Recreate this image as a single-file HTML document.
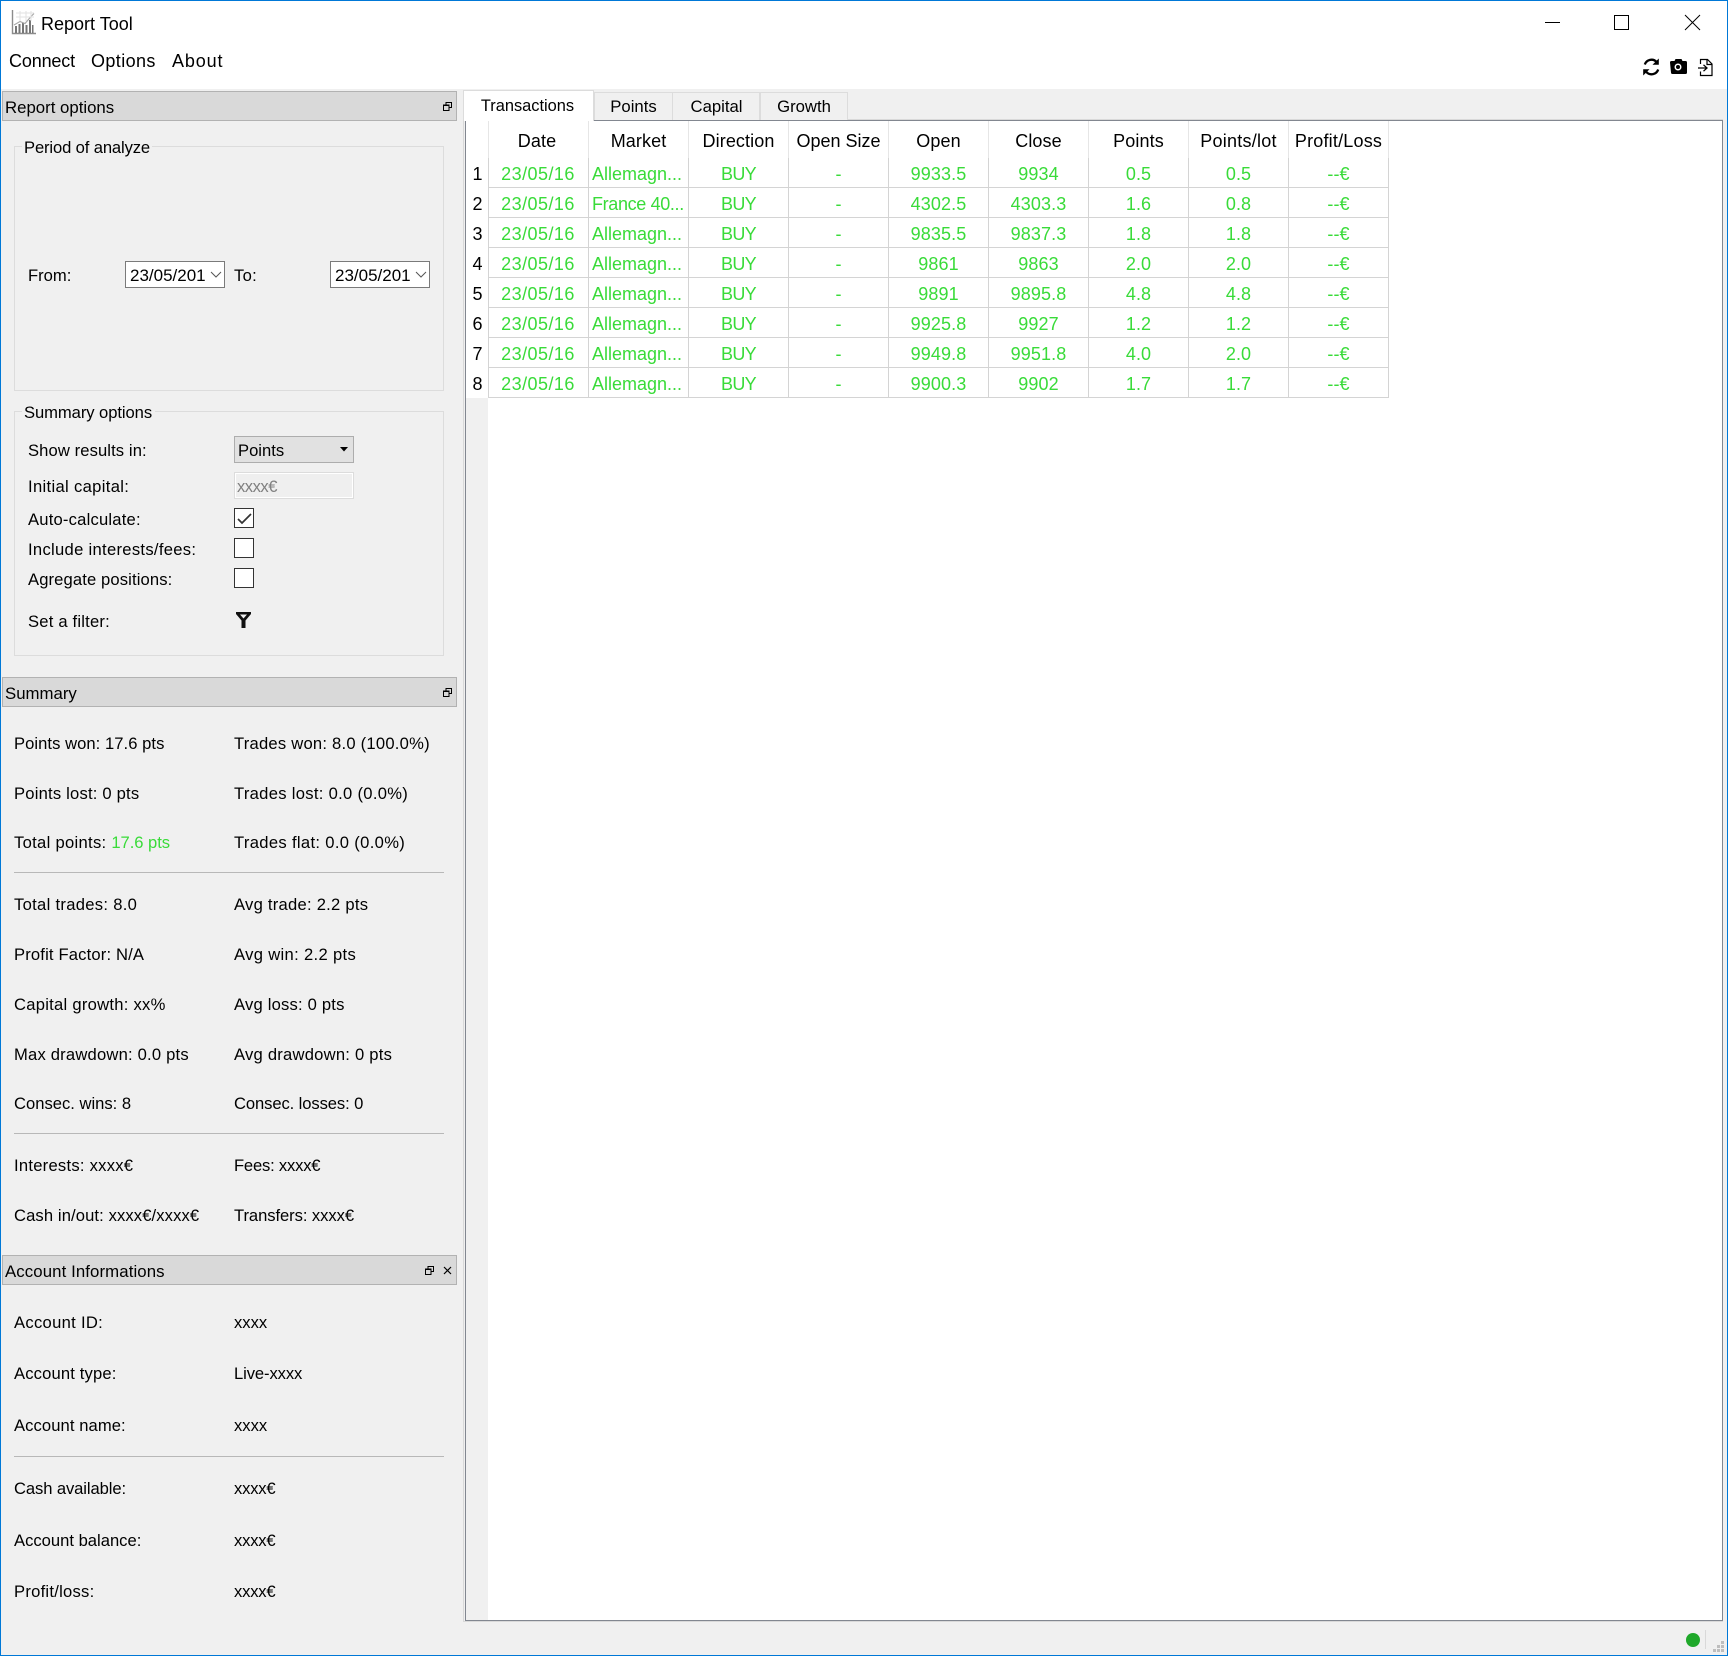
<!DOCTYPE html>
<html lang="en"><head><meta charset="utf-8"><title>Report Tool</title>
<style>
html,body{margin:0;padding:0;background:#f0f0f0}
body{width:1728px;height:1656px;position:relative;overflow:hidden;font-family:"Liberation Sans",sans-serif;color:#000}
.a,.t{position:absolute}
.t{white-space:nowrap;font-size:16.6px;line-height:20px}
.dock{position:absolute;left:2px;width:453px;height:28px;background:#d9d9d9;border:1px solid #b2b2b2}
.dock span{position:absolute;left:2px;top:6px;font-size:16.8px;line-height:20px}
.group{position:absolute;left:14px;width:428px;border:1px solid #dcdcdc}
.hr{position:absolute;left:14px;width:430px;height:1px;background:#b8b8b8}
.tab{position:absolute;box-sizing:border-box;height:28px;top:92px;background:#f0f0f0;border:1px solid #dcdcdc;border-bottom:0;font-size:16.7px;line-height:27px;text-align:center}
.date{position:absolute;box-sizing:border-box;top:261px;width:100px;height:27px;background:#fff;border:1px solid #7a7a7a;overflow:hidden}
.date span{position:absolute;left:4px;top:4px;font-size:17px;line-height:20px;width:76px;overflow:hidden;white-space:nowrap}
.date svg{position:absolute;left:84px;top:9px}
.cb{position:absolute;box-sizing:border-box;left:234px;width:20px;height:20px;background:#fff;border:1px solid #333}
table{position:absolute;left:466px;top:121px;border-collapse:separate;border-spacing:0;table-layout:fixed;width:923px;background:#fff;font-size:18px}
col.g{width:23px}col.c{width:100px}
th,td{box-sizing:border-box;padding:3px 0 0;text-align:center;white-space:nowrap;overflow:hidden}
th{height:37px;font-weight:400;border-right:1px solid #e6e6e6;letter-spacing:.1px}
td{height:30px;color:#39db39;border-right:1px solid #d4d4d4;border-bottom:1px solid #d4d4d4;letter-spacing:.1px}
td:nth-child(2){letter-spacing:.45px;padding-right:1px}
th:nth-child(2){padding-right:3px}
td.n{color:#000;border-bottom:0;background:#fff;text-align:center;padding-left:1px}
td.l{text-align:left;padding-left:3px;letter-spacing:0}
td.b{letter-spacing:-.7px}
th.n{border-right:1px solid #e6e6e6}
.g{color:#39db39}
</style></head><body>

<!-- window background / header -->
<div class="a" style="left:0;top:0;width:1728px;height:89px;background:#fff"></div>

<!-- logo -->
<svg class="a" style="left:11px;top:9px" width="26" height="26" viewBox="0 0 26 26">
<path d="M1.500 1v23.500H25" fill="none" stroke="#8c8c8c" stroke-width="1.400"/>
<path d="M4 24V17h2v7zM7.500 24V15h2v9zM11 24V14h2v10zM14.500 24V16h2v8zM18 24V11h2v13zM21 24V16h1.500v8z" fill="#777"/>
<path d="M3 16l6-3.500 5 2 6-7 3-3" fill="none" stroke="#a8a8a8" stroke-width="1.200"/>
<path d="M5 4h18M5 8h18M9 2v10M15 2v10M20 2v10" stroke="#e2e2e2" stroke-width="1"/>
</svg>
<div class="t" style="left:41px;top:14px;font-size:18px">Report Tool</div>
<div class="t" style="left:9px;top:51px;font-size:18px;letter-spacing:-.15px">Connect</div>
<div class="t" style="left:91px;top:51px;font-size:18px;letter-spacing:.4px">Options</div>
<div class="t" style="left:172px;top:51px;font-size:18px;letter-spacing:.85px">About</div>

<!-- window controls -->
<svg class="a" style="left:1530px;top:0" width="190" height="40" viewBox="0 0 190 40">
<path d="M15 22.500h15" stroke="#000" stroke-width="1"/>
<rect x="84.500" y="15.500" width="14" height="14" fill="none" stroke="#000" stroke-width="1"/>
<path d="M155 15l15 15M170 15l-15 15" stroke="#000" stroke-width="1"/>
</svg>

<!-- toolbar -->
<svg class="a" style="left:1640px;top:56px" width="78" height="22" viewBox="0 0 78 22">
<!-- refresh -->
<path d="M4.800 8.500A7 7 0 0 1 16.600 6" fill="none" stroke="#000" stroke-width="2.300"/>
<path d="M18.800 2.500v6.300h-6.300z" fill="#000"/>
<path d="M18.200 13.500A7 7 0 0 1 6.400 16" fill="none" stroke="#000" stroke-width="2.300"/>
<path d="M3.200 19.500v-6.300h6.300z" fill="#000"/>
<!-- camera -->
<path d="M30 6.500q0-1.500 1.500-1.500h3l1-2h6l1 2h3q1.500 0 1.500 1.500v10q0 1.500-1.500 1.500h-13q-1.500 0-1.500-1.500z" fill="#000"/>
<circle cx="38" cy="11" r="3.500" fill="#fff"/><circle cx="38" cy="11" r="2" fill="#000"/>
<!-- file import -->
<path d="M60.500 8V3.500h7l4.500 4.500v11.500H60.500V15.500" fill="none" stroke="#000" stroke-width="1.200"/>
<path d="M67 3.500v5h5" fill="none" stroke="#000" stroke-width="1.200"/>
<path d="M58 12h8.500M63.500 8.800l3.500 3.200L63.500 15.200" fill="none" stroke="#000" stroke-width="1.300"/>
</svg>

<!-- Report options dock -->
<div class="dock" style="top:91px"><span>Report options</span></div>
<svg class="a" style="left:443px;top:102px" width="9" height="9" viewBox="0 0 9 9"><path d="M3 2.500V.5h5.500v5H6.500M.5 3h5.500v5.500H.5z" fill="none" stroke="#000"/><path d="M0 3h6v1H0zM3 0h6v1H3z"/></svg>

<div class="group" style="top:146px;height:243px"></div>
<div class="a" style="left:22px;top:136px;width:130px;height:20px;background:#f0f0f0"></div>
<div class="t" style="left:24px;top:138px;letter-spacing:-.13px">Period of analyze</div>
<div class="t" style="left:28px;top:266px">From:</div>
<div class="date" style="left:125px"><span>23/05/2016</span><svg width="12" height="8" viewBox="0 0 12 8"><path d="M1 1l5 5 5-5" fill="none" stroke="#555"/></svg></div>
<div class="t" style="left:234px;top:266px;letter-spacing:.3px">To:</div>
<div class="date" style="left:330px"><span>23/05/2016</span><svg width="12" height="8" viewBox="0 0 12 8"><path d="M1 1l5 5 5-5" fill="none" stroke="#555"/></svg></div>

<div class="group" style="top:411px;height:243px"></div>
<div class="a" style="left:22px;top:402px;width:133px;height:20px;background:#f0f0f0"></div>
<div class="t" style="left:24px;top:403px;letter-spacing:-.07px">Summary options</div>
<div class="t" style="left:28px;top:441px;letter-spacing:.1px">Show results in:</div>
<div class="a" style="left:234px;top:436px;width:118px;height:25px;background:#e1e1e1;border:1px solid #adadad"></div>
<div class="t" style="left:238px;top:441px">Points</div>
<svg class="a" style="left:340px;top:447px" width="8" height="5" viewBox="0 0 8 5"><path d="M0 0h8L4 4.500z" fill="#000"/></svg>
<div class="t" style="left:28px;top:477px;letter-spacing:.33px">Initial capital:</div>
<div class="a" style="left:234px;top:472px;width:118px;height:25px;background:#efefef;border:1px solid #dcdcdc;box-shadow:inset 0 0 0 1px #fff"></div>
<div class="t" style="left:237px;top:477px;color:#808080;letter-spacing:-.5px">xxxx€</div>
<div class="t" style="left:28px;top:510px;letter-spacing:.2px">Auto-calculate:</div>
<div class="cb" style="top:508px"><svg style="position:absolute;left:2px;top:3px" width="15" height="13" viewBox="0 0 15 13"><path d="M1 7l4 4 9-9" fill="none" stroke="#333" stroke-width="1.700"/></svg></div>
<div class="t" style="left:28px;top:540px;letter-spacing:.3px">Include interests/fees:</div>
<div class="cb" style="top:538px"></div>
<div class="t" style="left:28px;top:570px;letter-spacing:.12px">Agregate positions:</div>
<div class="cb" style="top:568px"></div>
<div class="t" style="left:28px;top:612px;letter-spacing:.2px">Set a filter:</div>
<svg class="a" style="left:235px;top:611px" width="17" height="18" viewBox="0 0 17 18"><path fill-rule="evenodd" d="M1 1h15v2l-5.500 6.500V17h-4V9.500L1 3zM5 3.500l3.500 4 3.500-4z" fill="#111"/></svg>

<!-- Summary dock -->
<div class="dock" style="top:677px"><span>Summary</span></div>
<svg class="a" style="left:443px;top:688px" width="9" height="9" viewBox="0 0 9 9"><path d="M3 2.500V.5h5.500v5H6.500M.5 3h5.500v5.500H.5z" fill="none" stroke="#000"/><path d="M0 3h6v1H0zM3 0h6v1H3z"/></svg>

<div class="t" style="left:14px;top:734px;letter-spacing:.05px">Points won: 17.6 pts</div><div class="t" style="left:234px;top:734px;letter-spacing:.23px">Trades won: 8.0 (100.0%)</div>
<div class="t" style="left:14px;top:784px;letter-spacing:.2px">Points lost: 0 pts</div><div class="t" style="left:234px;top:784px;letter-spacing:.3px">Trades lost: 0.0 (0.0%)</div>
<div class="t" style="left:14px;top:833px;letter-spacing:.3px">Total points: <span class="g" style="letter-spacing:-.05px">17.6 pts</span></div><div class="t" style="left:234px;top:833px;letter-spacing:.33px">Trades flat: 0.0 (0.0%)</div>
<div class="hr" style="top:872px"></div>
<div class="t" style="left:14px;top:895px;letter-spacing:.3px">Total trades: 8.0</div><div class="t" style="left:234px;top:895px;letter-spacing:.25px">Avg trade: 2.2 pts</div>
<div class="t" style="left:14px;top:945px;letter-spacing:.16px">Profit Factor: N/A</div><div class="t" style="left:234px;top:945px;letter-spacing:.33px">Avg win: 2.2 pts</div>
<div class="t" style="left:14px;top:995px;letter-spacing:.26px">Capital growth: xx%</div><div class="t" style="left:234px;top:995px;letter-spacing:.2px">Avg loss: 0 pts</div>
<div class="t" style="left:14px;top:1045px;letter-spacing:.2px">Max drawdown: 0.0 pts</div><div class="t" style="left:234px;top:1045px;letter-spacing:.23px">Avg drawdown: 0 pts</div>
<div class="t" style="left:14px;top:1094px">Consec. wins: 8</div><div class="t" style="left:234px;top:1094px;letter-spacing:-.1px">Consec. losses: 0</div>
<div class="hr" style="top:1133px"></div>
<div class="t" style="left:14px;top:1156px;letter-spacing:.25px">Interests: xxxx€</div><div class="t" style="left:234px;top:1156px;letter-spacing:-.2px">Fees: xxxx€</div>
<div class="t" style="left:14px;top:1206px;letter-spacing:.11px">Cash in/out: xxxx€/xxxx€</div><div class="t" style="left:234px;top:1206px;letter-spacing:-.07px">Transfers: xxxx€</div>

<!-- Account dock -->
<div class="dock" style="top:1255px"><span style="letter-spacing:.1px">Account Informations</span></div>
<svg class="a" style="left:425px;top:1266px" width="9" height="9" viewBox="0 0 9 9"><path d="M3 2.500V.5h5.500v5H6.500M.5 3h5.500v5.500H.5z" fill="none" stroke="#000"/><path d="M0 3h6v1H0zM3 0h6v1H3z"/></svg>
<svg class="a" style="left:443px;top:1266px" width="9" height="9" viewBox="0 0 9 9"><path d="M1 1l7 7M8 1l-7 7" stroke="#000" stroke-width="1.200"/></svg>

<div class="t" style="left:14px;top:1313px;letter-spacing:.3px">Account ID:</div><div class="t" style="left:234px;top:1313px">xxxx</div>
<div class="t" style="left:14px;top:1364px;letter-spacing:.15px">Account type:</div><div class="t" style="left:234px;top:1364px;letter-spacing:-.1px">Live-xxxx</div>
<div class="t" style="left:14px;top:1416px;letter-spacing:.08px">Account name:</div><div class="t" style="left:234px;top:1416px">xxxx</div>
<div class="hr" style="top:1456px"></div>
<div class="t" style="left:14px;top:1479px;letter-spacing:-.1px">Cash available:</div><div class="t" style="left:234px;top:1479px;letter-spacing:-.2px">xxxx€</div>
<div class="t" style="left:14px;top:1531px">Account balance:</div><div class="t" style="left:234px;top:1531px;letter-spacing:-.2px">xxxx€</div>
<div class="t" style="left:14px;top:1582px;letter-spacing:.25px">Profit/loss:</div><div class="t" style="left:234px;top:1582px;letter-spacing:-.2px">xxxx€</div>

<!-- tab pane -->
<div class="a" style="left:463px;top:119px;width:1260px;height:1503px;box-sizing:border-box;border:1px solid #d9d9d9"></div>
<div class="a" style="left:465px;top:120px;width:1258px;height:1501px;box-sizing:border-box;border:1px solid #828790;background:#fff"></div>
<div class="a" style="left:466px;top:397px;width:22px;height:1223px;background:#f0f0f0"></div>
<div class="a" style="left:488px;top:121px;width:1px;height:36px;background:#e6e6e6"></div>

<div class="tab" style="left:594px;width:79px">Points</div>
<div class="tab" style="left:672px;width:88px;padding-left:1px">Capital</div>
<div class="tab" style="left:760px;width:88px">Growth</div>
<div class="tab" style="left:463px;top:90px;width:131px;height:31px;background:#fff;line-height:30px;padding-right:2px;z-index:2;font-size:16.4px">Transactions</div>

<table>
<colgroup><col class="g"><col class="c"><col class="c"><col class="c"><col class="c"><col class="c"><col class="c"><col class="c"><col class="c"><col class="c"></colgroup>
<thead><tr><th class="n"></th><th>Date</th><th>Market</th><th>Direction</th><th style="letter-spacing:0">Open Size</th><th>Open</th><th>Close</th><th>Points</th><th style="letter-spacing:.25px">Points/lot</th><th style="letter-spacing:.2px">Profit/Loss</th></tr></thead>
<tbody>
<tr><td class="n">1</td><td>23/05/16</td><td class="l">Allemagn...</td><td class="b">BUY</td><td>-</td><td>9933.5</td><td>9934</td><td>0.5</td><td>0.5</td><td>--€</td></tr>
<tr><td class="n">2</td><td>23/05/16</td><td class="l" style="letter-spacing:-.35px">France 40...</td><td class="b">BUY</td><td>-</td><td>4302.5</td><td>4303.3</td><td>1.6</td><td>0.8</td><td>--€</td></tr>
<tr><td class="n">3</td><td>23/05/16</td><td class="l">Allemagn...</td><td class="b">BUY</td><td>-</td><td>9835.5</td><td>9837.3</td><td>1.8</td><td>1.8</td><td>--€</td></tr>
<tr><td class="n">4</td><td>23/05/16</td><td class="l">Allemagn...</td><td class="b">BUY</td><td>-</td><td>9861</td><td>9863</td><td>2.0</td><td>2.0</td><td>--€</td></tr>
<tr><td class="n">5</td><td>23/05/16</td><td class="l">Allemagn...</td><td class="b">BUY</td><td>-</td><td>9891</td><td>9895.8</td><td>4.8</td><td>4.8</td><td>--€</td></tr>
<tr><td class="n">6</td><td>23/05/16</td><td class="l">Allemagn...</td><td class="b">BUY</td><td>-</td><td>9925.8</td><td>9927</td><td>1.2</td><td>1.2</td><td>--€</td></tr>
<tr><td class="n">7</td><td>23/05/16</td><td class="l">Allemagn...</td><td class="b">BUY</td><td>-</td><td>9949.8</td><td>9951.8</td><td>4.0</td><td>2.0</td><td>--€</td></tr>
<tr><td class="n">8</td><td>23/05/16</td><td class="l">Allemagn...</td><td class="b">BUY</td><td>-</td><td>9900.3</td><td>9902</td><td>1.7</td><td>1.7</td><td>--€</td></tr>
</tbody></table>

<!-- status bar -->
<div class="a" style="left:1686px;top:1633px;width:14px;height:14px;border-radius:50%;background:#1fa82a"></div>
<div class="a" style="left:1705px;top:1630px;width:1px;height:19px;background:#d9d9d9"></div>
<svg class="a" style="left:1713px;top:1641px" width="12" height="12" viewBox="0 0 12 12"><path d="M8 0h3v3H8zM4 4h3v3H4zM8 4h3v3H8zM0 8h3v3H0zM4 8h3v3H4zM8 8h3v3H8z" fill="#bdbdbd"/></svg>

<!-- window border -->
<div class="a" style="left:0;top:0;width:1728px;height:1656px;box-sizing:border-box;border:1px solid #0078d7;pointer-events:none;z-index:9"></div>
</body></html>
